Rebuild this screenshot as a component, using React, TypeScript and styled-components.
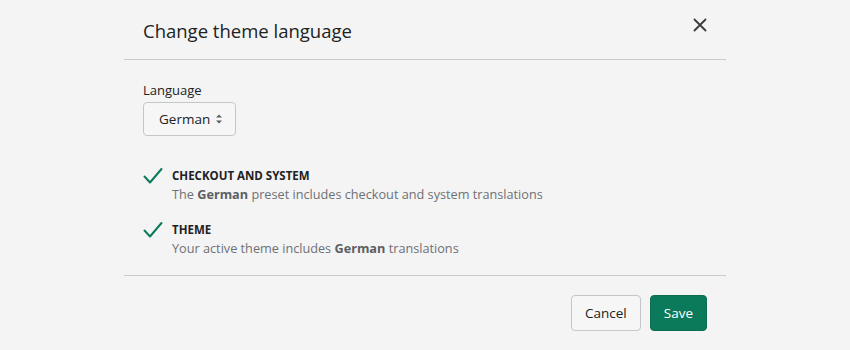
import styled, { createGlobalStyle } from 'styled-components';

const GlobalStyle = createGlobalStyle`
  html, body {
    margin: 0;
    padding: 0;
    background: #f4f4f4;
  }
  body {
    font-family: 'Open Sans', 'Noto Sans', 'Liberation Sans', sans-serif;
    color: #202223;
  }
`;

const Page = styled.div`
  width: 850px;
  height: 350px;
  display: flex;
  justify-content: center;
  background: #f4f4f4;
`;

const Dialog = styled.div`
  width: 602px;
  display: flex;
  flex-direction: column;
`;

const Header = styled.div`
  height: 60px;
  box-sizing: border-box;
  display: flex;
  align-items: center;
  justify-content: space-between;
  padding: 0 14px 0 19px;
  border-bottom: 1px solid #c9cccf;
`;

const Title = styled.h1`
  margin: 0;
  font-size: 18.5px;
  font-weight: 400;
  color: #202223;
  padding-top: 1px;
`;

const CloseButton = styled.button`
  width: 24px;
  height: 24px;
  padding: 0;
  border: none;
  background: none;
  display: flex;
  align-items: center;
  justify-content: center;
  margin-bottom: 9px;
  cursor: pointer;
`;

const Body = styled.div`
  padding: 21px 19px 18px;
  display: flex;
  flex-direction: column;
  border-bottom: 1px solid #c9cccf;
`;

const Label = styled.label`
  font-size: 13px;
  color: #202223;
  margin-bottom: 3px;
`;

const Select = styled.div`
  width: 93px;
  height: 34px;
  box-sizing: border-box;
  border: 1px solid #c4c7ca;
  border-radius: 4px;
  display: flex;
  align-items: center;
  justify-content: space-between;
  padding: 0 12px 0 15px;
  font-size: 13.5px;
  color: #202223;
  background: #f6f6f6;
`;

const Checks = styled.div`
  display: flex;
  flex-direction: column;
  gap: 18px;
  margin-top: 31px;
`;

const CheckRow = styled.div`
  display: flex;
  gap: 9px;
`;

const CheckText = styled.div`
  display: flex;
  flex-direction: column;
  gap: 1px;
`;

const CheckTitle = styled.div`
  font-size: 11.5px;
  font-weight: 700;
  text-transform: uppercase;
  color: #202223;
  line-height: 17px;
`;

const CheckDesc = styled.div`
  font-size: 12.7px;
  color: #6d7175;
  line-height: 18px;
  b {
    color: #5c5f62;
    font-weight: 700;
  }
`;

const Footer = styled.div`
  display: flex;
  justify-content: flex-end;
  gap: 9px;
  padding: 19px 19px;
`;

const Button = styled.button<{ $primary?: boolean }>`
  height: 36px;
  box-sizing: border-box;
  padding: 0 13px;
  border-radius: 4px;
  font-family: inherit;
  font-size: 13.5px;
  cursor: pointer;
  border: 1px solid ${(p) => (p.$primary ? '#0b6e52' : '#c4c7ca')};
  background: ${(p) => (p.$primary ? '#0b7a5b' : '#f6f6f6')};
  color: ${(p) => (p.$primary ? '#ffffff' : '#202223')};
`;

function Check() {
  return (
    <svg width="20" height="18" viewBox="0 0 20 18" style={{ flexShrink: 0 }}>
      <path d="M1.5 9.5 L7 15.5 L18.5 2" fill="none" stroke="#0b7a5b" strokeWidth="2" strokeLinecap="round" strokeLinejoin="round" />
    </svg>
  );
}

export default function App() {
  return (
    <>
      <GlobalStyle />
      <Page>
        <Dialog>
          <Header>
            <Title>Change theme language</Title>
            <CloseButton aria-label="Close">
              <svg width="14" height="14" viewBox="0 0 14 14">
                <path d="M1.5 1.5 L12.5 12.5 M12.5 1.5 L1.5 12.5" stroke="#3a3c3e" strokeWidth="1.8" strokeLinecap="round" />
              </svg>
            </CloseButton>
          </Header>
          <Body>
            <Label>Language</Label>
            <Select>
              <span>German</span>
              <svg width="8" height="12" viewBox="0 0 8 12">
                <path d="M1 4.5 L4 1.5 L7 4.5 Z M1 7.5 L4 10.5 L7 7.5 Z" fill="#5c5f62" />
              </svg>
            </Select>
            <Checks>
              <CheckRow>
                <Check />
                <CheckText>
                  <CheckTitle>Checkout and system</CheckTitle>
                  <CheckDesc>
                    The <b>German</b> preset includes checkout and system translations
                  </CheckDesc>
                </CheckText>
              </CheckRow>
              <CheckRow>
                <Check />
                <CheckText>
                  <CheckTitle>Theme</CheckTitle>
                  <CheckDesc>
                    Your active theme includes <b>German</b> translations
                  </CheckDesc>
                </CheckText>
              </CheckRow>
            </Checks>
          </Body>
          <Footer>
            <Button>Cancel</Button>
            <Button $primary>Save</Button>
          </Footer>
        </Dialog>
      </Page>
    </>
  );
}
